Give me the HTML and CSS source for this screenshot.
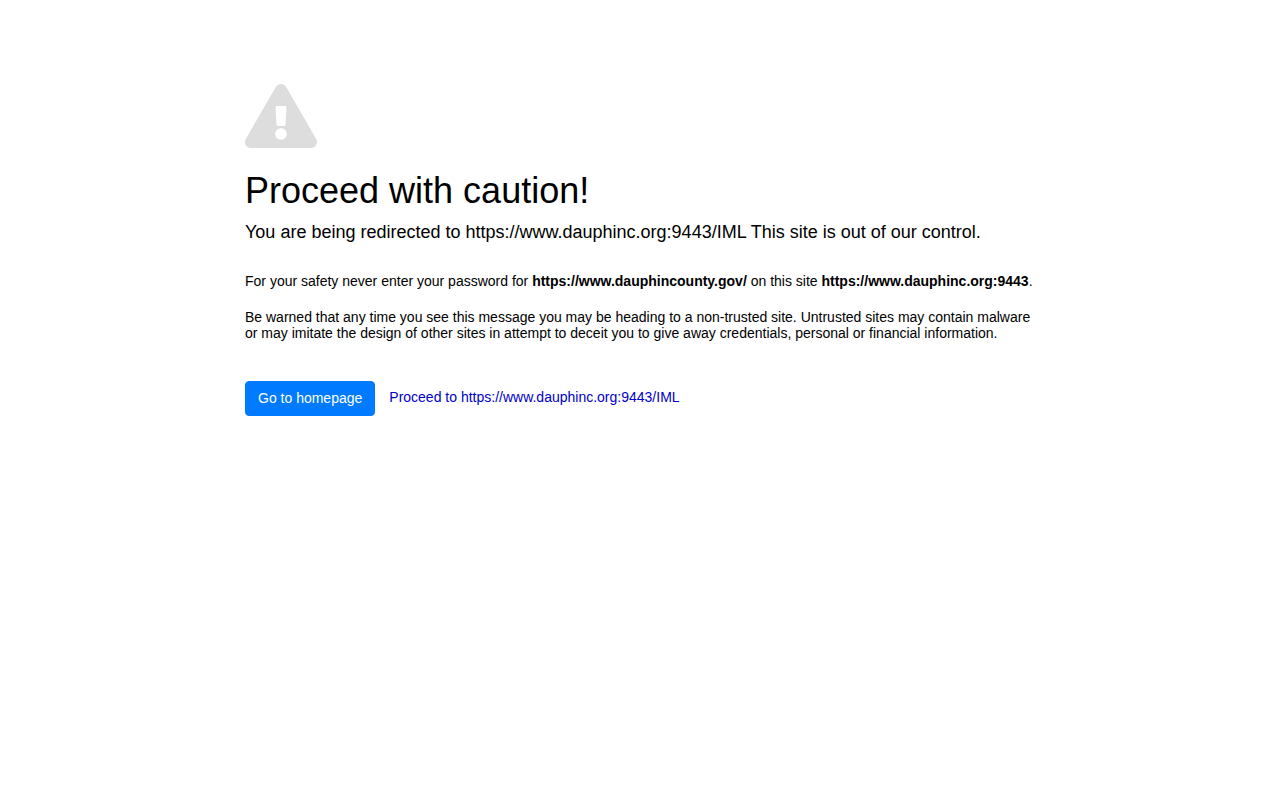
FILE: index.html
```html
<!DOCTYPE html>
<html lang="en">
<head>
<meta charset="utf-8">
<meta name="viewport" content="width=device-width, initial-scale=1">
<title>Proceed with caution!</title>
<link rel="stylesheet" href="styles.css">
</head>
<body>
<main class="notice">
  <svg class="notice-icon" viewBox="0 0 576 512" aria-hidden="true"><path d="M569.517 440.013C587.975 472.007 564.806 512 527.940 512H48.054c-36.937 0-59.999-40.055-41.577-71.987L246.423 23.985c18.467-32.009 64.720-31.951 83.154 0l239.940 416.028zM288 354c-25.405 0-46 20.595-46 46s20.595 46 46 46 46-20.595 46-46-20.595-46-46-46zm-43.673-165.346l7.418 136c.347 6.364 5.609 11.346 11.982 11.346h48.546c6.373 0 11.635-4.982 11.982-11.346l7.418-136c.375-6.874-5.098-12.654-11.982-12.654h-63.383c-6.884 0-12.356 5.780-11.981 12.654z"/></svg>
  <h1 class="notice-title">Proceed with caution!</h1>
  <p class="notice-lead">You are being redirected to https://www.dauphinc.org:9443/IML This site is out of our control.</p>
  <p class="notice-text">For your safety never enter your password for <strong>https://www.dauphincounty.gov/</strong> on this site <strong>https://www.dauphinc.org:9443</strong>.</p>
  <p class="notice-text">Be warned that any time you see this message you may be heading to a non-trusted site. Untrusted sites may contain malware or may imitate the design of other sites in attempt to deceit you to give away credentials, personal or financial information.</p>
  <div class="actions">
    <a class="button" href="https://www.dauphincounty.gov/">Go to homepage</a>
    <a class="proceed" href="https://www.dauphinc.org:9443/IML">Proceed to https://www.dauphinc.org:9443/IML</a>
  </div>
</main>
</body>
</html>
```

FILE: styles.css
```css
* {
  box-sizing: border-box;
}

body {
  margin: 0;
  background: #fff;
  color: #000;
  font-family: "Liberation Sans", Arial, sans-serif;
  font-size: 14px;
  line-height: 16px;
}

.notice {
  max-width: 830px;
  margin: 0 auto;
  padding: 84px 20px 40px;
}

.notice-icon {
  display: block;
  width: 72px;
  height: 64px;
  fill: #ddd;
}

.notice-title {
  margin: 22px 0 11px;
  font-size: 36px;
  font-weight: 400;
  line-height: 41px;
}

.notice-lead {
  margin: 0 0 31px;
  font-size: 18px;
  line-height: 20px;
}

.notice-text {
  margin: 0 0 20px;
}

.actions {
  display: flex;
  flex-wrap: wrap;
  align-items: flex-start;
  gap: 14px;
  margin-top: 40px;
}

.button {
  padding: 8px 12px 9px;
  border: 1px solid #007bff;
  border-radius: 4px;
  background: #007bff;
  color: #fff;
  text-decoration: none;
}

.proceed {
  padding: 8px 0;
  color: #00c;
  text-decoration: none;
}
```
